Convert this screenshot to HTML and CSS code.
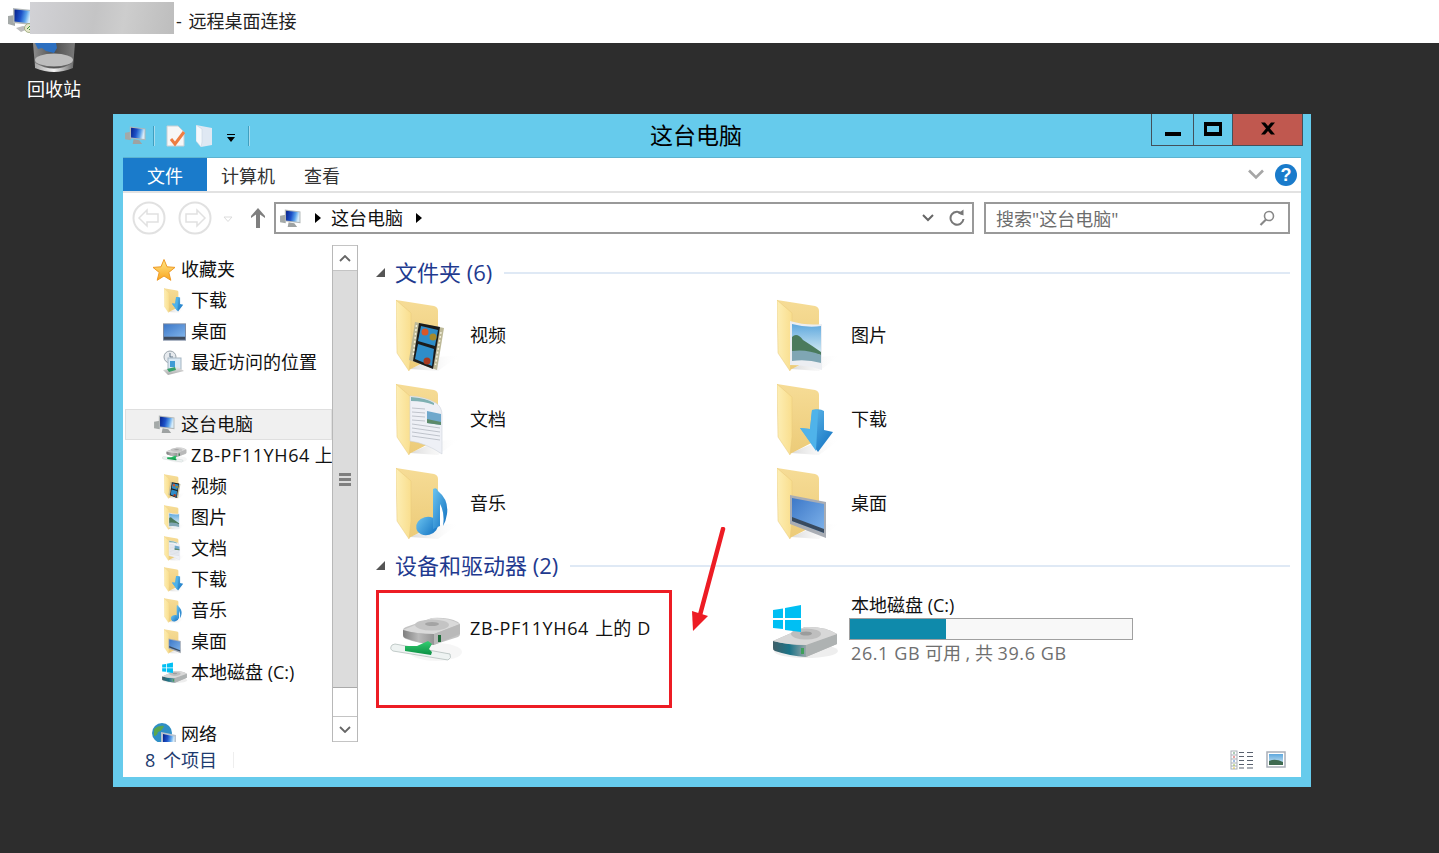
FILE: index.html
```html
<!DOCTYPE html>
<html lang="zh-CN">
<head>
<meta charset="utf-8">
<title>这台电脑 - 远程桌面连接</title>
<link rel="stylesheet" href="styles.css">
</head>
<body>
<svg class="defs" aria-hidden="true">
  <defs>
    <linearGradient id="gFront" x1="0" y1="0" x2="1" y2="0"><stop offset="0" stop-color="#fdeeb4"/><stop offset="1" stop-color="#f9de8e"/></linearGradient>
    <linearGradient id="gBack" x1="0" y1="0" x2="0" y2="1"><stop offset="0" stop-color="#f6dc96"/><stop offset="1" stop-color="#eccb78"/></linearGradient>
    <linearGradient id="gScreen" x1="0" y1="0" x2="1" y2="0.2"><stop offset="0" stop-color="#06208a"/><stop offset=".45" stop-color="#1d52c8"/><stop offset=".75" stop-color="#5aa2ea"/><stop offset="1" stop-color="#d6ecfa"/></linearGradient>
    <linearGradient id="gStar" x1="0" y1="0" x2="0" y2="1"><stop offset="0" stop-color="#ffe88a"/><stop offset="1" stop-color="#f9a51e"/></linearGradient>
    <linearGradient id="gBlue" x1="0" y1="0" x2="1" y2="1"><stop offset="0" stop-color="#6cc4f0"/><stop offset="1" stop-color="#0f6fc0"/></linearGradient>
    <linearGradient id="gDesk" x1="0" y1="0" x2="1" y2="1"><stop offset="0" stop-color="#3d78c8"/><stop offset="1" stop-color="#7fb3ea"/></linearGradient>
    <linearGradient id="gSky" x1="0" y1="0" x2="0" y2="1"><stop offset="0" stop-color="#5ea8de"/><stop offset="1" stop-color="#d8ecf4"/></linearGradient>
    <linearGradient id="gDrive" x1="0" y1="0" x2="0" y2="1"><stop offset="0" stop-color="#e9e9e9"/><stop offset="1" stop-color="#a9a9a9"/></linearGradient>
    <linearGradient id="gFace" x1="0" y1="0" x2="1" y2="0"><stop offset="0" stop-color="#7f7f7f"/><stop offset=".5" stop-color="#b9b9b9"/><stop offset="1" stop-color="#949494"/></linearGradient>
    <linearGradient id="gTeal" x1="0" y1="0" x2="1" y2="0"><stop offset="0" stop-color="#3f5f68"/><stop offset=".5" stop-color="#1b7488"/><stop offset="1" stop-color="#98a6a8"/></linearGradient>
    <linearGradient id="gGreen" x1="0" y1="0" x2="0" y2="1"><stop offset="0" stop-color="#34cf72"/><stop offset="1" stop-color="#0b8f43"/></linearGradient>
    <linearGradient id="gBin" x1="0" y1="0" x2="1" y2="0"><stop offset="0" stop-color="#a8a8a8"/><stop offset=".5" stop-color="#f2f2f2"/><stop offset="1" stop-color="#6e6e6e"/></linearGradient>
    <linearGradient id="gBinBody" x1="0" y1="0" x2="1" y2="0"><stop offset="0" stop-color="#8d8d8d"/><stop offset=".5" stop-color="#4f4f4f"/><stop offset="1" stop-color="#7a7a7a"/></linearGradient>
    <linearGradient id="gShadow" x1="0" y1="0" x2="1" y2="0"><stop offset="0" stop-color="#c9c9c9" stop-opacity=".7"/><stop offset="1" stop-color="#fff" stop-opacity="0"/></linearGradient>

    <symbol id="folder" viewBox="0 0 70 76">
      <path d="M14 70 L42 58 L64 56 L42 72Z" fill="url(#gShadow)"/>
      <path d="M0 1 L38 7 Q42 8 42 12 L42 56 L13 71Z" fill="url(#gBack)"/>
      <path d="M0 1 L15 14 L15 54 L13 72 L1 54Z" fill="url(#gFront)" stroke="#e8c979" stroke-width=".5"/>
    </symbol>

    <symbol id="f-video" viewBox="0 0 70 76">
      <use href="#folder" width="70" height="76"/>
      <path d="M19 23 L48 29 L41 71 L13 61Z" fill="#bdb998"/>
      <path d="M23 24 L44 28 L37 70 L17 62Z" fill="#1b1b1b"/>
      <path d="M25 27 L42 31 L39 47 L22 42Z" fill="#2e8dc9"/>
      <path d="M22 45 L38 50 L36 67 L19 60Z" fill="#2e8dc9"/>
      <circle cx="29" cy="33" r="3.500" fill="#d8572a"/><circle cx="37" cy="38" r="3.500" fill="#a68a2c"/><circle cx="31" cy="62" r="3.500" fill="#a93a20"/>
      <path d="M20.500 26 L17 58 M45 33 L39.500 66" stroke="#f2efdc" stroke-width="1.500" stroke-dasharray="2 2"/>
    </symbol>

    <symbol id="f-doc" viewBox="0 0 70 76">
      <use href="#folder" width="70" height="76"/>
      <path d="M14 13 Q30 14 40 20 Q46 24 46 32 L46 71 Q30 60 14 58Z" fill="#eef0f6" stroke="#cfd3dc" stroke-width=".6"/>
      <path d="M15 14 Q30 15 38 20 L38 22 Q28 18 15 18Z" fill="#7fb0b2"/>
      <path d="M31 28 L45 31 L45 42 L31 40Z" fill="#6fa8cc"/>
      <path d="M31 36 L45 39 L45 42 L31 40Z" fill="#5c8a6a"/>
      <g stroke="#b3b7c0" stroke-width=".8" fill="none">
        <path d="M16 25 L29 26M16 29 L29 30M16 33 L29 34M16 37 L29 38M16 41 L44 45M16 45 L44 49M16 49 L44 53M16 53 L44 57"/>
      </g>
    </symbol>

    <symbol id="f-music" viewBox="0 0 70 76">
      <use href="#folder" width="70" height="76"/>
      <ellipse cx="31" cy="59" rx="11" ry="9" transform="rotate(-15 31 59)" fill="url(#gBlue)"/>
      <path d="M37 22 Q41 20 42 24 Q53 33 51 47 Q50 54 47 59 Q49 46 44 37 L44 59 L37 62Z" fill="url(#gBlue)"/>
    </symbol>

    <symbol id="f-pic" viewBox="0 0 70 76">
      <use href="#folder" width="70" height="76"/>
      <path d="M13 22 Q30 27 45 25 L45 71 Q30 66 13 66Z" fill="#eceef2"/>
      <path d="M15 25 Q30 29 44 27 L44 55 Q30 48 15 52Z" fill="url(#gSky)"/>
      <path d="M15 38 Q20 33 26 41 Q34 46 44 53 L44 56 Q30 52 15 54Z" fill="#4a7a5c"/>
      <path d="M15 52 Q30 50 44 56 L44 64 Q30 60 15 62Z" fill="#7fa6b4"/>
    </symbol>

    <symbol id="f-down" viewBox="0 0 70 76">
      <use href="#folder" width="70" height="76"/>
      <path d="M35 27 Q43 25 47 28 L47 47 L56 49 L41 69 L23 45 L33 46Z" fill="url(#gBlue)"/>
      <path d="M35 27 Q43 25 41 30 L39 68 L23 45 L33 46Z" fill="#4fb3ea"/>
    </symbol>

    <symbol id="f-desk" viewBox="0 0 70 76">
      <use href="#folder" width="70" height="76"/>
      <path d="M13 28 L49 35 L49 71 L13 57Z" fill="#a9adb4"/>
      <path d="M15 31 L47 37 L47 66 L15 54Z" fill="url(#gDesk)"/>
      <path d="M15 50 L47 62 L47 66 L15 54Z" fill="#394a5e"/>
    </symbol>

    <symbol id="pc" viewBox="0 0 22 20">
      <path d="M0 7 L6 6 L6 15 L0 14Z" fill="#a4a9a8"/>
      <path d="M9 14 L15 15 L18 19 L8 19Z" fill="#9ea2a2"/>
      <path d="M5 0.500 L21.500 2.500 L21.500 15 L5 13Z" fill="#b2b7b8"/>
      <path d="M6.300 1.800 L20.500 3.500 L20.500 13.800 L6.300 12Z" fill="url(#gScreen)"/>
    </symbol>

    <symbol id="pc-net" viewBox="0 0 26 26">
      <path d="M0 9 L7 8 L7 19 L0 17Z" fill="#a4a9a8"/>
      <path d="M5 1 L24 3 L24 18 L5 16Z" fill="#b2b7b8"/>
      <path d="M6.500 2.500 L23 4 L23 16.500 L6.500 14.500Z" fill="url(#gScreen)"/>
      <path d="M8 21 L15 19 L22 21 L13 25Z" fill="#bcbcbc"/>
      <circle cx="21" cy="21" r="4.500" fill="#e6e6c8" stroke="#8a9a6a" stroke-width=".7"/>
      <path d="M19 22 L22 19M21 23 L23 21" stroke="#3a9a3a" stroke-width="1"/>
    </symbol>

    <symbol id="star" viewBox="0 0 24 24">
      <path d="M12 1.500 L15 8.800 L23 9.400 L16.800 14.400 L18.800 22.300 L12 18 L5.200 22.300 L7.200 14.400 L1 9.400 L9 8.800Z" fill="url(#gStar)" stroke="#ee9a26" stroke-width="1"/>
    </symbol>

    <symbol id="desk" viewBox="0 0 24 18">
      <rect x="0" y="0" width="24" height="18" fill="#7d8ba3"/>
      <rect x="1" y="1" width="22" height="13" fill="url(#gDesk)"/>
      <rect x="1" y="14" width="22" height="3" fill="#3d4a5d"/>
    </symbol>

    <symbol id="recent" viewBox="0 0 24 26">
      <circle cx="9" cy="7" r="6" fill="#e6eaee" stroke="#9aa4ac"/>
      <path d="M9 3 V7 H12" stroke="#5b7184" fill="none"/>
      <rect x="7" y="8" width="13" height="11" fill="#dbe9f4" stroke="#a5b5c2"/>
      <rect x="9" y="11" width="5" height="6" fill="#3f9bd6"/>
      <path d="M2 20 L17 17 L23 21 L7 25Z" fill="url(#gDrive)"/>
      <path d="M6 19 L14 17 L15 20 L8 22Z" fill="#37a06a"/>
    </symbol>

    <symbol id="netdrive" viewBox="0 0 72 50">
      <ellipse cx="46" cy="36" rx="26" ry="9" fill="#eee" opacity=".5"/>
      <path d="M13 14 Q13 12 16 11 L42 2 Q58 1 68 6 Q70 7 70 10 L70 18 Q70 20 68 21 L43 29 Q28 27 16 23 Q13 22 13 20Z" fill="#c4c4c4"/>
      <path d="M13 14 L42 2 Q58 1 70 8 L44 18 Q26 18 13 14Z" fill="#dadada"/>
      <ellipse cx="42" cy="9" rx="17" ry="5.500" fill="#c4c4c4"/>
      <ellipse cx="42" cy="8" rx="7" ry="2" fill="#a4a4a4"/>
      <path d="M13 14 Q26 18 44 18 L44 29 Q28 27 15 22Q13 21 13 19Z" fill="url(#gFace)"/>
      <path d="M44 18 L70 8 L70 18 L44 29Z" fill="#b9b9b9"/>
      <rect x="48" y="19" width="3" height="7" fill="#1f6a3a"/>
      <path d="M2 29 Q-1 33 3 35 L58 44 Q62 42 60 38 L5 28Z" fill="#eef3f2" stroke="#b4bfbc" stroke-width=".8"/>
      <path d="M15 30 L27 30 L38 25 L42 28 L39 33 L42 36 L41 39 L15 35Z" fill="url(#gGreen)"/>
    </symbol>

    <symbol id="cdrive" viewBox="0 0 70 56">
      <ellipse cx="36" cy="47" rx="32" ry="7" fill="#ddd" opacity=".5"/>
      <path d="M3 37 L35 23 Q55 22 67 30 L67 40 L36 53 Q20 51 3 46Z" fill="#b8b8b8"/>
      <path d="M3 37 Q18 41 36 41 L36 53 Q20 52 5 47 Q3 46 3 44Z" fill="url(#gTeal)"/>
      <path d="M36 41 L67 30 L67 40 L36 53Z" fill="#aeb2b2"/>
      <path d="M3 37 L35 23 Q55 22 67 30 L36 41 Q18 41 3 37Z" fill="#d8d8d8"/>
      <ellipse cx="36" cy="30" rx="15" ry="5.500" fill="#bebebe"/>
      <ellipse cx="36" cy="29.500" rx="6" ry="2" fill="#9c9c9c"/>
      <rect x="31" y="44" width="3" height="6" fill="#3fa05a"/>
      <path d="M3 6 L13 4.500 V14 H3Z M15 4 L31 1 V14 H15Z M3 16 H13 V25 L3 24Z M15 16 H31 V28 L15 26Z" fill="#00bff3"/>
    </symbol>

    <symbol id="netglobe" viewBox="0 0 26 24">
      <circle cx="11" cy="10" r="10" fill="#2f8fc6"/>
      <path d="M3 6 Q8 2 13 3 Q11 8 7 9 Q6 13 3 13Z" fill="#5aa64f"/>
      <path d="M13 13 Q17 13 16 17 L12 19Z" fill="#5aa64f"/>
      <path d="M10 9 L25 12 L25 24 L10 22Z" fill="#b9c3cf"/>
      <path d="M12 11 L23.500 13.500 L23.500 22 L12 20Z" fill="url(#gScreen)"/>
    </symbol>
  </defs>
</svg>

<header class="rdp-bar">
  <svg class="rdp-icon"><use href="#pc-net"/></svg>
  <div class="rdp-blur"></div>
  <span class="rdp-title">- 远程桌面连接</span>
</header>

<main class="desktop">
  <div class="bin">
    <svg class="bin-icon" viewBox="0 0 44 30">
      <path d="M1 0 H43 L41 24 Q22 32 3 24Z" fill="url(#gBinBody)"/>
      <path d="M3 0 H24 L25 5 L22 10 L14 8 L10 5 L6 6Z" fill="#2c6fc0"/>
      <ellipse cx="22" cy="17" rx="19" ry="6.500" fill="#bdbdbd"/>
      <path d="M3 20 Q22 31 41 20 L41 25 Q22 33 3 25Z" fill="url(#gBin)"/>
    </svg>
    <span class="bin-label">回收站</span>
  </div>

  <section class="window">
    <div class="win-title">
      <div class="qat">
        <svg class="qat-pc"><use href="#pc"/></svg>
        <i class="qat-sep"></i>
        <svg class="qat-doc" viewBox="0 0 20 22">
          <path d="M1 1 H12 L18 7 V21 H1Z" fill="#f7f7f7" stroke="#c9cfd4"/>
          <path d="M5 14 L9 19 L18 7" fill="none" stroke="#ee7d42" stroke-width="3"/>
        </svg>
        <svg class="qat-folder" viewBox="0 0 18 22">
          <path d="M0 0 L16 3 V20 L5 22Z" fill="#dfe8f3"/>
          <path d="M0 0 L6 4 V17 L5 22 L0 16Z" fill="#f4f8fc" stroke="#c2d0de" stroke-width=".5"/>
        </svg>
        <svg class="qat-drop" viewBox="0 0 10 8"><path d="M1 0 H9 V1 H1Z M1 3 H9 L5 8Z" fill="#000"/></svg>
        <i class="qat-sep"></i>
      </div>
      <h1 class="win-name">这台电脑</h1>
      <div class="caption">
        <div class="cap cap-min"><i class="min-glyph"></i></div>
        <div class="cap cap-max"><i class="max-glyph"></i></div>
        <div class="cap cap-close">
          <svg class="close-glyph" viewBox="0 0 16 13"><path d="M1 0.500 H5 L8 4 L11 0.500 H15 L10 6.500 L15 12.500 H11 L8 9 L5 12.500 H1 L6 6.500Z" fill="#000"/></svg>
        </div>
      </div>
    </div>

    <div class="client">
      <nav class="ribbon">
        <span class="tab tab-file">文件</span>
        <span class="tab">计算机</span>
        <span class="tab">查看</span>
        <span class="ribbon-right">
          <svg class="ribbon-chev" viewBox="0 0 16 11"><path d="M1 1.500 L8 8.500 L15 1.500" fill="none" stroke="#a6a6a6" stroke-width="2.600"/></svg>
          <span class="help">?</span>
        </span>
      </nav>

      <div class="navbar">
        <svg class="nav-btn" viewBox="0 0 34 34"><circle cx="17" cy="17" r="15.500" fill="none" stroke="#e1e1e1" stroke-width="2"/><path d="M7 17 L15 9 V13 H26 V21 H15 V25Z" fill="none" stroke="#e1e1e1" stroke-width="1.500"/></svg>
        <svg class="nav-btn nav-fwd" viewBox="0 0 34 34"><circle cx="17" cy="17" r="15.500" fill="none" stroke="#e1e1e1" stroke-width="2"/><path d="M27 17 L19 9 V13 H8 V21 H19 V25Z" fill="none" stroke="#e1e1e1" stroke-width="1.500"/></svg>
        <svg class="nav-drop" viewBox="0 0 10 6"><path d="M1 1 H9 L5 5.500Z" fill="none" stroke="#dcdcdc"/></svg>
        <svg class="nav-up" viewBox="0 0 16 20"><path d="M8 0 L15 8 L15 10 L10 6.500 V20 H6 V6.500 L1 10 L1 8Z" fill="#7f7f7f"/></svg>
        <div class="address">
          <svg class="addr-pc"><use href="#pc"/></svg>
          <i class="addr-tri"></i>
          <span class="addr-text">这台电脑</span>
          <i class="addr-tri addr-tri2"></i>
          <span class="addr-fill"></span>
          <svg class="addr-chev" viewBox="0 0 12 8"><path d="M1 1 L6 6 L11 1" fill="none" stroke="#666" stroke-width="2"/></svg>
          <svg class="addr-refresh" viewBox="0 0 16 18"><path d="M13 5 A6.500 6.500 0 1 0 14.500 10" fill="none" stroke="#777" stroke-width="2"/><path d="M9 4.500 L14.500 6.500 L14.500 0.500Z" fill="#777"/></svg>
        </div>
        <div class="search">
          <span class="search-text">搜索"这台电脑"</span>
          <svg class="search-icon" viewBox="0 0 16 16"><circle cx="10" cy="6" r="4.500" fill="none" stroke="#888" stroke-width="1.600"/><path d="M7 9.500 L1.500 15" stroke="#888" stroke-width="2.200"/></svg>
        </div>
      </div>

      <div class="main">
        <aside class="tree">
          <div class="tree-scroll">
            <div class="row row-top"><svg class="ic ic-star"><use href="#star"/></svg>收藏夹</div>
            <div class="row"><svg class="ic"><use href="#f-down"/></svg>下载</div>
            <div class="row"><svg class="ic ic-desk"><use href="#desk"/></svg>桌面</div>
            <div class="row"><svg class="ic ic-recent"><use href="#recent"/></svg>最近访问的位置</div>
            <div class="row row-blank"></div>
            <div class="row row-top row-sel"><svg class="ic ic-pc"><use href="#pc"/></svg>这台电脑</div>
            <div class="row"><svg class="ic ic-nd"><use href="#netdrive"/></svg><span class="lat">ZB-PF11YH64</span>&nbsp;上的 D</div>
            <div class="row"><svg class="ic"><use href="#f-video"/></svg>视频</div>
            <div class="row"><svg class="ic"><use href="#f-pic"/></svg>图片</div>
            <div class="row"><svg class="ic"><use href="#f-doc"/></svg>文档</div>
            <div class="row"><svg class="ic"><use href="#f-down"/></svg>下载</div>
            <div class="row"><svg class="ic"><use href="#f-music"/></svg>音乐</div>
            <div class="row"><svg class="ic"><use href="#f-desk"/></svg>桌面</div>
            <div class="row"><svg class="ic ic-cd"><use href="#cdrive"/></svg>本地磁盘 (C:)</div>
            <div class="row row-blank"></div>
            <div class="row row-top"><svg class="ic ic-globe"><use href="#netglobe"/></svg>网络</div>
          </div>
        </aside>

        <div class="scrollbar">
          <div class="sb-btn"><svg class="sb-arrow" viewBox="0 0 12 7"><path d="M1 6 L6 1 L11 6" fill="none" stroke="#666" stroke-width="1.800"/></svg></div>
          <div class="sb-thumb"><i></i><i></i><i></i></div>
          <div class="sb-track"></div>
          <div class="sb-btn sb-btn-down"><svg class="sb-arrow" viewBox="0 0 12 7"><path d="M1 1 L6 6 L11 1" fill="none" stroke="#666" stroke-width="1.800"/></svg></div>
        </div>

        <div class="content">
          <div class="group-head"><i class="group-tri"></i><span class="group-name">文件夹 (6)</span><i class="group-line"></i></div>
          <div class="items">
            <div class="item"><svg class="big"><use href="#f-video"/></svg><span class="item-name">视频</span></div>
            <div class="item"><svg class="big"><use href="#f-pic"/></svg><span class="item-name">图片</span></div>
            <div class="item"><svg class="big"><use href="#f-doc"/></svg><span class="item-name">文档</span></div>
            <div class="item"><svg class="big"><use href="#f-down"/></svg><span class="item-name">下载</span></div>
            <div class="item"><svg class="big"><use href="#f-music"/></svg><span class="item-name">音乐</span></div>
            <div class="item"><svg class="big"><use href="#f-desk"/></svg><span class="item-name">桌面</span></div>
          </div>
          <div class="group-head group-head2"><i class="group-tri"></i><span class="group-name">设备和驱动器 (2)</span><i class="group-line"></i></div>
          <div class="items drives">
            <div class="drive">
              <svg class="drive-nd"><use href="#netdrive"/></svg>
              <span class="drive-label"><span class="lat">ZB-PF11YH64</span> 上的 D</span>
            </div>
            <div class="drive">
              <svg class="drive-c"><use href="#cdrive"/></svg>
              <div class="drive-info">
                <div class="drive-name">本地磁盘 (C:)</div>
                <div class="bar"><div class="bar-fill"></div></div>
                <div class="drive-free"><span class="lat">26.1 GB</span> 可用 , 共 <span class="lat">39.6 GB</span></div>
              </div>
            </div>
          </div>
        </div>
      </div>

      <footer class="status">
        <span class="status-count">8 个项目</span>
        <i class="status-sep"></i>
        <span class="status-right">
          <svg class="view-list" viewBox="0 0 24 20">
            <rect x="1" y="1" width="6" height="18" fill="#fff" stroke="#a9afb8"/>
            <path d="M1 5 H7M1 9 H7M1 13 H7M1 16 H7" stroke="#a9afb8"/>
            <path d="M3 3 H5" stroke="#5a9a6a"/><path d="M3 7 H5" stroke="#d14545"/><path d="M3 11 H5" stroke="#4a7fc9"/><path d="M3 15 H5" stroke="#9ac04a"/><path d="M3 18 H5" stroke="#e0c040"/>
            <path d="M9 2.500 H14M17 2.500 H23M9 6.500 H14M17 6.500 H23M9 10.500 H14M17 10.500 H23M9 14.500 H14M17 14.500 H23M9 18 H14M17 18 H23" stroke="#59616e" stroke-width="1.200"/>
          </svg>
          <svg class="view-big" viewBox="0 0 20 17">
            <rect x="1" y="1" width="18" height="15" fill="#fff" stroke="#a9afb8" stroke-width="1.500"/>
            <rect x="3" y="3" width="14" height="11" fill="url(#gSky)"/>
            <path d="M3 10 Q9 7 17 11 V14 H3Z" fill="#3e6a50"/>
          </svg>
        </span>
      </footer>
    </div>
  </section>

  <div class="mark-box"></div>
  <svg class="mark-arrow" viewBox="0 0 40 110">
    <path d="M33 2 L10 88" stroke="#ed1c24" stroke-width="4.500" stroke-linecap="round" fill="none"/>
    <path d="M2 84 L3 104 L18 89Z" fill="#ed1c24"/>
  </svg>
</main>
</body>
</html>
```
FILE: styles.css
```css
* { box-sizing: border-box; }
html, body { margin: 0; height: 100%; }
body {
  display: flex;
  flex-direction: column;
  width: 1439px;
  height: 853px;
  overflow: hidden;
  font: 18px/26px "Open Sans", "Noto Sans CJK SC", sans-serif;
  color: #111;
}
.defs { display: block; width: 0; height: 0; overflow: hidden; }
i { display: block; font-style: normal; }
svg { display: block; flex: none; }
.lat { letter-spacing: .6px; }

/* remote desktop bar */
.rdp-bar { flex: none; height: 43px; background: #fff; display: flex; align-items: flex-start; }
.rdp-icon { width: 26px; height: 26px; margin: 7px -4px 0 8px; }
.rdp-blur {
  width: 144px; height: 32px; margin: 2px 0 0 0;
  background: linear-gradient(100deg, #d2d2d6, #c4c4c5 45%, #cdcdcd 65%, #bdbdbd);
}
.rdp-title { margin: 8px 0 0 2px; color: #222; white-space: pre; word-spacing: 2px; }

/* desktop */
.desktop { flex: 1; background: #2d2d2d; position: relative; }
.bin { position: absolute; left: 27px; top: 0; width: 54px; display: flex; flex-direction: column; align-items: center; }
.bin-icon { width: 44px; height: 30px; }
.bin-label { color: #fff; margin-top: 3px; white-space: nowrap; }

/* window */
.window {
  position: absolute; left: 113px; top: 71px;
  width: 1198px; height: 673px;
  background: #66cbec;
  padding: 0 10px 10px;
  display: flex; flex-direction: column;
}
.win-title { flex: none; height: 44px; display: flex; align-items: flex-start; }
.qat { display: flex; align-items: center; height: 44px; width: 127px; padding: 0 0 0 2px; }
.qat-pc { width: 21px; height: 19px; margin-top: -2px; }
.qat-sep { width: 2px; height: 20px; background: #a6dcee; border-left: 1px solid #3f9fc0; }
.qat-pc + .qat-sep { margin-left: 7px; }
.qat-doc { width: 20px; height: 22px; margin-left: 11px; }
.qat-folder { width: 18px; height: 22px; margin-left: 10px; }
.qat-drop { width: 10px; height: 8px; margin-left: 12px; margin-top: 4px; }
.qat-drop + .qat-sep { margin-left: 12px; }
.win-name { flex: 1; margin: 7px 0 0; padding-right: 9px; font-weight: 400; font-size: 23px; line-height: 29px; text-align: center; color: #000; }
.caption { display: flex; height: 32px; margin-right: -2px; border: 1px solid #43505a; border-top: 0; }
.cap { display: flex; align-items: center; justify-content: center; }
.cap-min { width: 42px; border-right: 1px solid #43505a; }
.cap-max { width: 39px; border-right: 1px solid #43505a; }
.cap-close { width: 69px; background: #c0584f; }
.min-glyph { width: 16px; height: 4px; background: #000; margin-top: 8px; }
.max-glyph { width: 18px; height: 14px; border: 4px solid #000; border-left-width: 3px; border-right-width: 3px; margin-top: -2px; }
.close-glyph { width: 16px; height: 13px; margin-top: -2px; }

.client { flex: 1; background: #fff; display: flex; flex-direction: column; min-height: 0; box-shadow: 0 -1px 0 #5db3d0; }

/* ribbon */
.ribbon { flex: none; height: 35px; display: flex; border-bottom: 2px solid #e2e2e2; align-items: stretch; }
.tab { padding: 5px 15px 0 14px; color: #333; }
.tab-file { width: 84px; padding: 5px 0 0; text-align: center; background: #1a7bcb; color: #fff; margin-right: 0; }
.ribbon-right { margin-left: auto; display: flex; align-items: center; padding-right: 4px; }
.ribbon-chev { width: 16px; height: 11px; margin-right: 11px; }
.help { width: 22px; height: 22px; border-radius: 50%; background: #1a7bcb; color: #fff; font: 700 18px/22px "Liberation Sans", sans-serif; text-align: center; }

/* navigation row */
.navbar { flex: none; height: 52px; display: flex; align-items: flex-start; padding: 8px 11px 0 9px; }
.nav-btn { width: 34px; height: 34px; margin-top: 0; }
.nav-fwd { margin-left: 12px; }
.nav-drop { width: 10px; height: 6px; margin: 15px 0 0 11px; }
.nav-up { width: 16px; height: 20px; margin: 7px 0 0 17px; }
.address {
  width: 700px; height: 32px; margin: 1px 0 0 8px;
  border: 2px solid #999; display: flex; align-items: center; padding: 0 7px 0 4px;
}
.addr-pc { width: 21px; height: 19px; }
.addr-tri { width: 0; height: 0; border-left: 6px solid #000; border-top: 5px solid transparent; border-bottom: 5px solid transparent; margin-left: 14px; }
.addr-tri2 { margin-left: 13px; }
.addr-text { margin-left: 10px; }
.addr-fill { flex: 1; }
.addr-chev { width: 12px; height: 8px; margin-right: 15px; }
.addr-refresh { width: 16px; height: 18px; }
.search {
  width: 306px; height: 32px; margin: 1px 0 0 10px;
  border: 2px solid #999; display: flex; align-items: center; padding: 0 13px 0 10px; color: #6d6d6d;
}
.search-text { flex: 1; padding-top: 1px; }
.search-icon { width: 16px; height: 16px; }

/* main */
.main { flex: none; height: 497px; display: flex; }
.tree { flex: none; width: 209px; overflow: hidden; padding-top: 9px; }
.tree-scroll { width: 209px; }
.row { height: 31px; display: flex; align-items: center; padding-left: 68px; white-space: nowrap; overflow: hidden; color: #111; line-height: 31px; position: relative; }
.row-top { padding-left: 58px; }
.row-blank { padding: 0; }
.row-sel { margin-left: 2px; padding-left: 56px; background: #f0f0f0; border: 1px solid #dfdfdf; }
.ic { width: 24px; height: 26px; margin-left: -27px; margin-right: 3px; }
.ic-star { width: 24px; height: 24px; margin-left: -29px; margin-right: 5px; }
.ic-desk { width: 23px; height: 18px; margin-left: -28px; margin-right: 5px; }
.ic-recent { width: 24px; height: 26px; margin-left: -30px; margin-right: 6px; }
.ic-pc { width: 21px; height: 19px; margin-left: -28px; margin-right: 6px; }
.ic-nd { width: 25px; height: 19px; margin-left: -29px; margin-right: 4px; }
.ic-cd { width: 27px; height: 22px; margin-left: -30px; margin-right: 3px; }
.ic-globe { width: 26px; height: 24px; margin-left: -30px; margin-right: 4px; }

/* scrollbar */
.scrollbar { flex: none; width: 26px; display: flex; flex-direction: column; border: 1px solid #b8b8b8; border-top: 0; border-bottom: 0; }
.sb-btn { flex: none; height: 26px; border: 1px solid #c4c4c4; border-left: 0; border-right: 0; background: #fff; display: flex; align-items: center; justify-content: center; }
.sb-arrow { width: 12px; height: 7px; }
.sb-thumb { flex: none; height: 417px; background: #dcdcdc; border-bottom: 1px solid #aaa; display: flex; flex-direction: column; align-items: center; justify-content: center; gap: 2px; padding-top: 0; }
.sb-thumb i { width: 12px; height: 3px; background: #7f7f7f; }
.sb-track { flex: 1; background: #fff; }

/* content */
.content { flex: 1; min-width: 0; padding: 13px 11px 0 18px; }
.group-head { height: 30px; display: flex; align-items: center; }
.group-head2 { margin-top: 0; }
.group-tri { width: 0; height: 0; border-bottom: 9px solid #555; border-left: 9px solid transparent; margin-top: -1px; }
.group-name { margin-left: 10px; font-size: 22px; line-height: 28px; color: #1f3a8f; white-space: nowrap; position: relative; bottom: 1px; }
.group-line { flex: 1; height: 2px; background: #dfe9f5; margin-left: 12px; }
.items { display: grid; grid-template-columns: 381px 381px; grid-auto-rows: 84px; margin: 11px 0 0 20px; }
.item { display: flex; align-items: flex-start; }
.big { width: 70px; height: 76px; margin-right: 4px; }
.item-name { margin-top: 23px; }
.drives { margin-top: 8px; grid-auto-rows: 100px; }
.drive { display: flex; align-items: flex-start; }
.drive-nd { width: 72px; height: 50px; margin: 27px 8px 0 -6px; }
.drive-label { margin-top: 26px; white-space: nowrap; word-spacing: 1.500px; }
.drive-c { width: 70px; height: 56px; margin: 15px 11px 0 -7px; }
.drive-info { display: flex; flex-direction: column; padding-top: 3px; }
.drive-name { line-height: 26px; }
.bar { width: 284px; height: 22px; margin-left: -2px; border: 1px solid #a0a0a0; background: #f8f8f8; }
.bar-fill { height: 100%; width: 34%; background: #0f8aab; }
.drive-free { color: #6f6f6f; line-height: 26px; white-space: nowrap; }

/* status */
.status { flex: 1; display: flex; align-items: center; padding: 0 15px 0 22px; color: #1d3a6e; }
.status-count { word-spacing: 3px; }
.status-sep { width: 1px; height: 16px; background: #eee; margin-left: 16px; }
.status-right { margin-left: auto; display: flex; align-items: center; gap: 12px; }
.view-list { width: 24px; height: 20px; }
.view-big { width: 20px; height: 17px; }

/* annotations */
.mark-box { position: absolute; left: 376px; top: 547px; width: 296px; height: 118px; border: 3px solid #ed1c24; }
.mark-arrow { position: absolute; left: 690px; top: 484px; width: 40px; height: 110px; }
```
